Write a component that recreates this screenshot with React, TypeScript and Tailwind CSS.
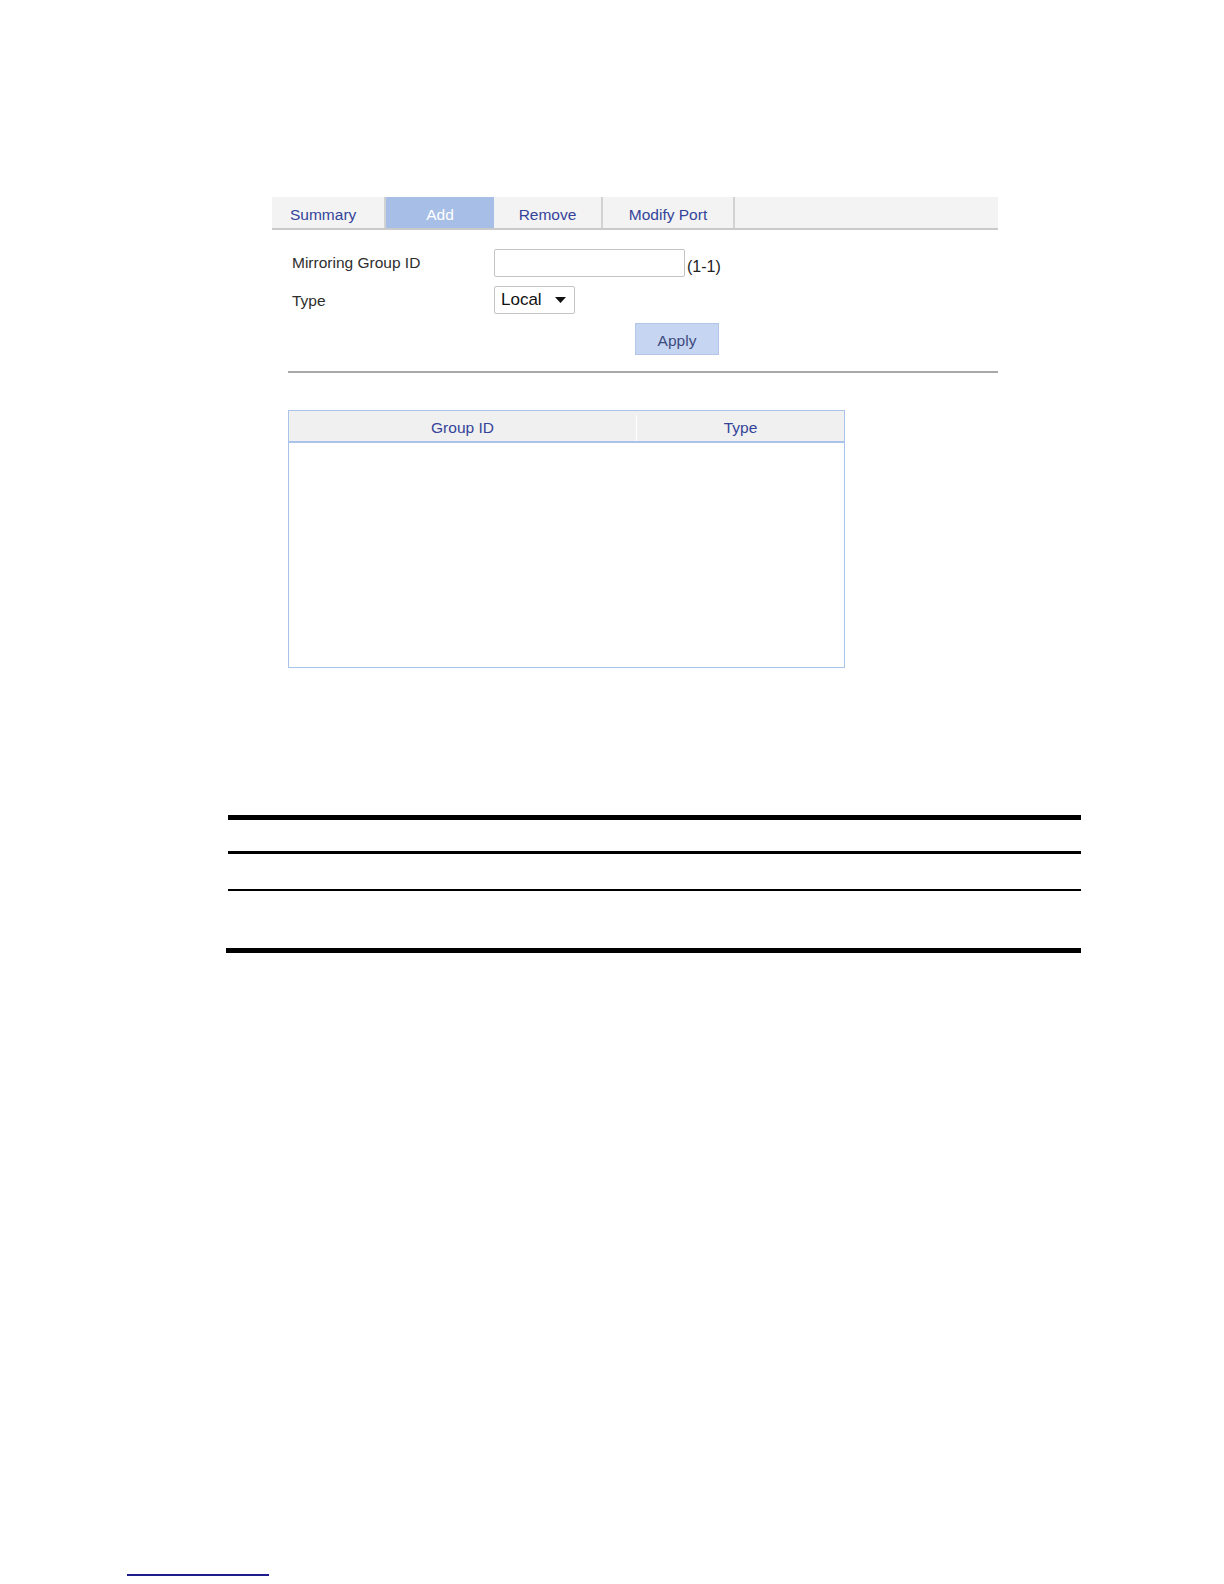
export default function App() {
  return (
    <div className="w-[1224px] h-[1584px] bg-white overflow-hidden" style={{ fontFamily: '"Liberation Sans", Arial, sans-serif' }}>
      {/* tab strip */}
      <div className="ml-[272px] mt-[197px] w-[726px] h-[33px] flex bg-[#f3f3f3] border-b-2 border-[#cacaca] text-[15.5px] text-[#34449a]">
        <div className="w-[114px] flex items-center pl-[18px] pt-[5px] border-r-2 border-[#d2d2d2]">Summary</div>
        <div className="w-[108px] flex items-center justify-center pt-[5px] bg-[#a7bfe7] text-white">Add</div>
        <div className="w-[109px] flex items-center justify-center pt-[5px] border-r-2 border-[#d2d2d2]">Remove</div>
        <div className="w-[132px] flex items-center justify-center pt-[5px] border-r-2 border-[#d2d2d2]">Modify Port</div>
      </div>

      {/* form */}
      <div className="ml-[292px] mt-[19px] text-[15.5px] text-[#2e2e2e]">
        <div className="flex items-center h-[28px]">
          <div className="w-[202px]">Mirroring Group ID</div>
          <div className="w-[191px] h-[28px] border border-[#c4c4c4] rounded-[2px] bg-white" />
          <div className="ml-[2px] mt-[8px] text-[16px] text-[#222222]">(1-1)</div>
        </div>
        <div className="flex items-center h-[28px] mt-[9px]">
          <div className="w-[202px] pt-[2px]">Type</div>
          <div className="w-[81px] h-[28px] border border-[#c4c4c4] rounded-[2px] bg-white flex items-center pl-[6px] text-[17px] text-[#111111]">
            <span>Local</span>
            <svg className="ml-[13px]" width="11" height="6" viewBox="0 0 11 6">
              <path d="M0 0 H11 L5.5 6 Z" fill="#111111" />
            </svg>
          </div>
        </div>
        <div className="ml-[343px] mt-[9px] w-[84px] h-[32px] pt-[4px] bg-[#c6d6f2] border border-[#b3c6ea] flex items-center justify-center text-[15.5px] text-[#3d4a80]">
          Apply
        </div>
      </div>

      <div className="ml-[288px] mt-[16px] w-[710px] h-[2px] bg-[#a9a9a9]" />

      {/* table */}
      <div className="ml-[288px] mt-[37px] w-[557px] h-[258px] border border-[#a9c4e8] bg-white">
        <div className="flex h-[32px] pt-[4px] bg-[#f0f0f0] border-b-2 border-[#a9c4e8] text-[15.5px] text-[#34449a]">
          <div className="w-[348px] flex items-center justify-center border-r border-white">Group ID</div>
          <div className="flex-1 flex items-center justify-center">Type</div>
        </div>
      </div>

      {/* rule lines */}
      <div className="ml-[228px] mt-[147px] w-[853px]">
        <div className="h-[5px] bg-black" />
        <div className="h-[3px] bg-black mt-[31px]" />
        <div className="h-[2px] bg-black mt-[35px]" />
        <div className="h-[5px] bg-black mt-[57px] -ml-[2px]" />
      </div>

      <div className="ml-[127px] mt-[621px] w-[142px] h-[2px] bg-[#1c1c8e]" />
    </div>
  );
}
